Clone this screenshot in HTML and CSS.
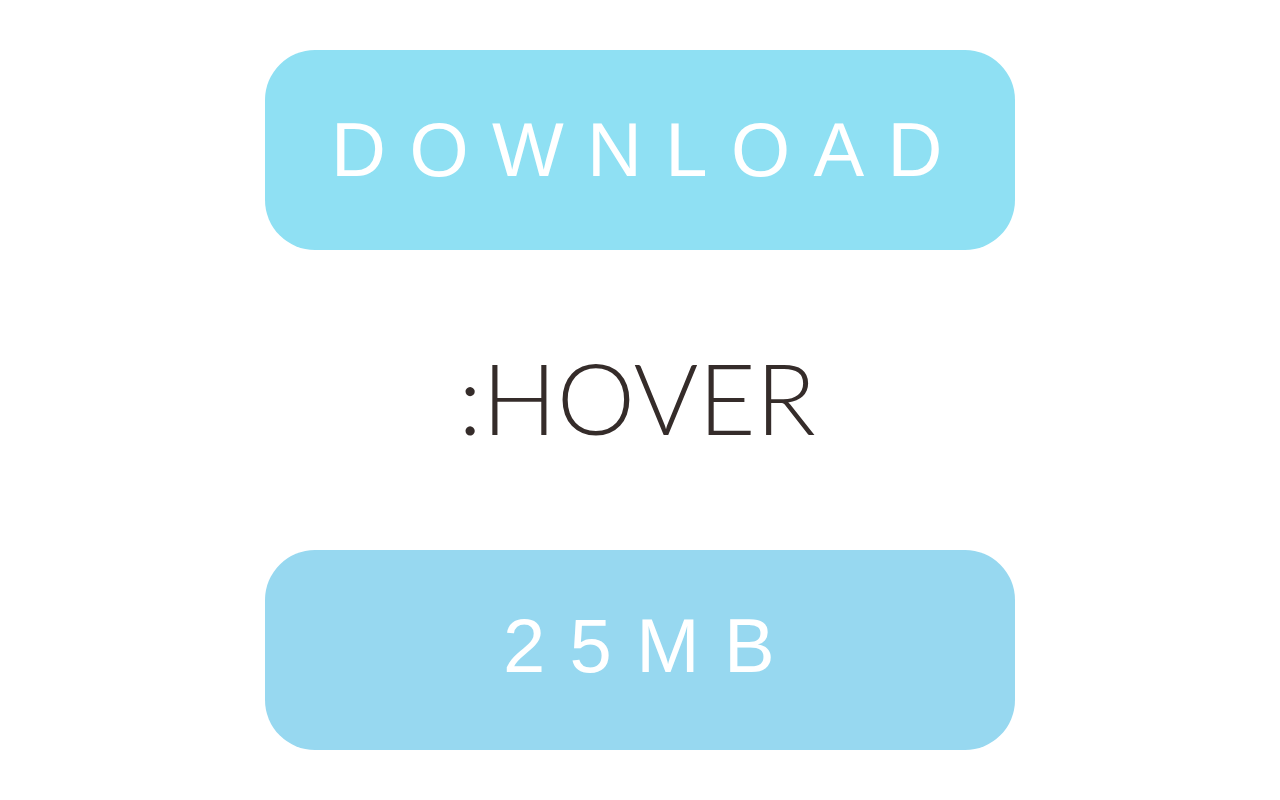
FILE: index.html
```html
<!DOCTYPE html>
<html>
<head>
<meta charset="utf-8">
<link rel="stylesheet" href="styles.css">
</head>
<body>
<main class="stack">
  <a class="btn btn-normal" href="#"><span class="btn-label">DOWNLOAD</span></a>
  <div class="state">:HOVER</div>
  <a class="btn btn-hover" href="#"><span class="btn-label">25MB</span></a>
</main>
</body>
</html>
```
FILE: styles.css
```css
html, body {
  margin: 0;
  padding: 0;
  background: #ffffff;
}
.stack {
  display: flex;
  flex-direction: column;
  align-items: center;
  padding-top: 50px;
}
.btn {
  width: 750px;
  height: 200px;
  border-radius: 50px;
  display: flex;
  align-items: center;
  justify-content: center;
  text-decoration: none;
  color: #ffffff;
  font-family: "Liberation Sans", Arial, sans-serif;
  font-size: 76px;
  letter-spacing: 23.4px;
}
.btn-label {
  padding-left: 17px;
  line-height: 1;
}
.btn-normal {
  background: #8fe0f3;
}
.btn-hover {
  background: #97d8f0;
  letter-spacing: 24.4px;
}
.btn-hover .btn-label {
  padding-left: 22px;
  padding-bottom: 8px;
}
.state {
  height: 300px;
  box-sizing: border-box;
  padding-bottom: 8px;
  padding-right: 6px;
  display: flex;
  align-items: center;
  justify-content: center;
  font-family: Lato, "DejaVu Sans", sans-serif;
  font-size: 99px;
  font-weight: 300;
  color: #352c2a;
}
```
